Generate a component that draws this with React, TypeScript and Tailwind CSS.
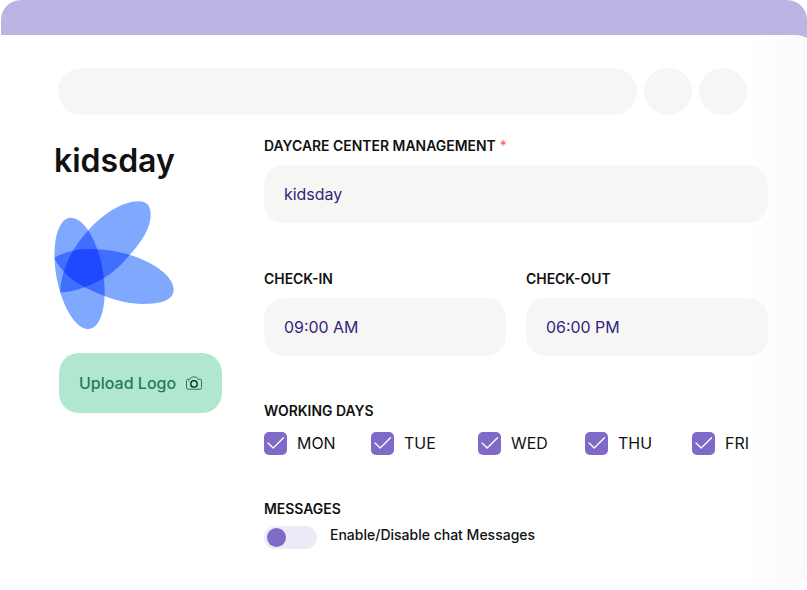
import React from "react";

function Camera() {
  return (
    <svg width="18" height="15" viewBox="0 0 18 15" fill="none" stroke="#287a57">
      <path d="M3 3.200h2.100l1.300-1.800q.3-.4.8-.4h3.600q.5 0 .8.4l1.300 1.800H15q1.500 0 1.500 1.500v7q0 1.500-1.500 1.500H3q-1.500 0-1.500-1.500v-7Q1.500 3.200 3 3.200Z" />
      <circle cx="9" cy="7.900" r="3.200" stroke="#111" strokeWidth="1.300" />
      <path d="M3.300 5.200h1" />
    </svg>
  );
}

function Petals() {
  return (
    <svg className="isolate block" width="120" height="128" viewBox="43 32 360 384" fill="#80a8ff">
      <ellipse className="mix-blend-multiply" cx="119.700" cy="249" rx="70.200" ry="169.400" transform="rotate(-10.400 119.700 249)" />
      <path
        className="mix-blend-multiply"
        d="M62 306C64 230 105 165 146 120C190 70 250 33 297 33C325 33 333 50 333 74C333 110 310 150 270 194C240 230 215 250 193 263C165 280 150 285 135 291C105 303 80 306 62 306Z"
      />
      <path
        className="mix-blend-multiply"
        d="M44 203C75 183 115 176 155 176C195 177 235 182 271 194C350 218 402 262 402 297C402 330 365 341 310 341C270 341 230 331 196 318C175 310 155 301 135 291C95 270 62 240 44 203Z"
      />
    </svg>
  );
}

function Label({ children }: { children: React.ReactNode }) {
  return <div className="h-5 text-[13.950px] leading-5 font-semibold whitespace-nowrap text-[#111]">{children}</div>;
}

function Field({ label, value, required }: { label: string; value: string; required?: boolean }) {
  return (
    <div className="flex-1">
      <Label>
        {label}
        {required && <span className="font-normal text-[#ff5c5c]"> *</span>}
      </Label>
      <div className="mt-[9px] flex h-[58px] items-center rounded-[20px] bg-[#f6f6f4] px-5 pt-0.5 text-[15.950px] text-[#35237d]">{value}</div>
    </div>
  );
}

function Day({ name }: { name: string }) {
  return (
    <div className="flex h-6 w-[107px] shrink-0 items-center gap-[10px] text-[15.950px] text-[#111]">
      <span className="flex size-[23px] items-center justify-center rounded-[5px] bg-[#7f6ac8]">
        <svg width="23" height="23" viewBox="0 0 23 23" fill="none" stroke="white" strokeWidth="1.300" strokeLinecap="round" strokeLinejoin="round">
          <path d="M4 11l5.200 5L19.500 5.800" />
        </svg>
      </span>
      <span className="pt-0.5 leading-6">{name}</span>
    </div>
  );
}

export default function App() {
  return (
    <div className="h-[590px] w-[807px] overflow-hidden bg-white font-['Inter',sans-serif]">
      <div className="ml-[0.500px] h-[590px] w-[806px] overflow-hidden rounded-t-[20px] rounded-br-[20px] bg-[linear-gradient(180deg,#bdb4e4_60px,#ffffff_60px)] pt-[35px]">
        <div className="-ml-[0.500px] h-[555px] w-[818px] rounded-tr-[22px] bg-[linear-gradient(90deg,#ffffff_0px,#ffffff_750px,#f9f9f9_815px)] pt-[33px]">
          <div className="ml-[58px] flex h-[47px] gap-[7.750px]">
            <div className="w-[578.500px] rounded-full bg-[#f6f6f4]" />
            <div className="w-[47.250px] rounded-full bg-[#f6f6f4]" />
            <div className="w-[47.250px] rounded-full bg-[#f6f6f4]" />
          </div>
          <div className="flex">
            <aside className="w-[264px] pl-[54px] pt-[26px]">
              <h1 className="h-10 text-[32px] leading-10 font-semibold text-[#111]">kidsday</h1>
              <div className="mt-[20px]">
                <Petals />
              </div>
              <button className="mt-[24.400px] ml-[5px] flex h-[60px] w-[163px] items-center gap-[9px] rounded-[20px] bg-[#b2e7cf] pl-5 text-[16px] font-medium whitespace-nowrap text-[#287a57]">
                Upload Logo
                <Camera />
              </button>
            </aside>
            <main className="w-[504px] pt-[21px]">
              <div className="flex">
                <Field label="DAYCARE CENTER MANAGEMENT" value="kidsday" required />
              </div>
              <div className="mt-[46px] flex gap-5">
                <Field label="CHECK-IN" value="09:00 AM" />
                <Field label="CHECK-OUT" value="06:00 PM" />
              </div>
              <div className="mt-[45px]">
                <Label>WORKING DAYS</Label>
                <div className="mt-[10px] flex h-6 items-center">
                  <Day name="MON" />
                  <Day name="TUE" />
                  <Day name="WED" />
                  <Day name="THU" />
                  <Day name="FRI" />
                </div>
              </div>
              <div className="mt-[44px]">
                <Label>MESSAGES</Label>
                <div className="mt-[6px] flex">
                  <div className="mt-px flex h-[23px] w-[53px] items-center rounded-full bg-[#eeeaf7] pl-[3px]">
                    <div className="size-[19px] rounded-full bg-[#7f6ac8]" />
                  </div>
                  <div className="ml-[13px] h-5 text-[14px] leading-5 font-medium text-[#111]">Enable/Disable chat Messages</div>
                </div>
              </div>
            </main>
          </div>
        </div>
      </div>
    </div>
  );
}
